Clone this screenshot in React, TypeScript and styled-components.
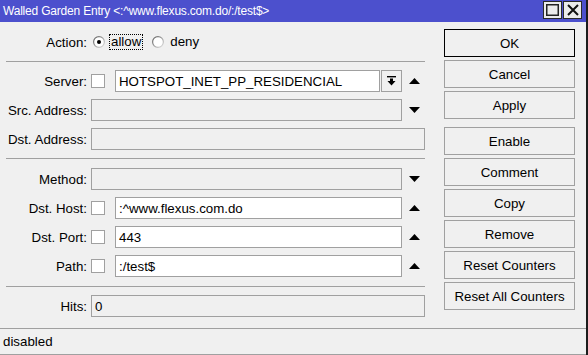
import React from 'react';
import styled, { createGlobalStyle } from 'styled-components';

const GlobalStyle = createGlobalStyle`
  html, body {
    margin: 0;
    padding: 0;
    background: #f0f0f0;
  }
  body {
    font-family: "Liberation Sans", Arial, sans-serif;
    font-size: 13.3px;
    color: #000;
  }
`;

// window frame
const Window = styled.div`
  width: 588px;
  height: 355px;
  box-sizing: border-box;
  border-right: 2px solid #1c1c1c;
  display: flex;
  flex-direction: column;
  background: #f0f0f0;
  overflow: hidden;
`;

const TitleBar = styled.div`
  height: 22px;
  flex: none;
  background: #4c50cd;
  display: flex;
  align-items: center;
  padding-left: 3px;
`;

const TitleText = styled.div`
  flex: 1;
  color: #fff;
  font-size: 12px;
  letter-spacing: -0.2px;
  white-space: nowrap;
`;

const TitleButtons = styled.div`
  display: flex;
  gap: 1px;
  margin-right: 4px;
  align-self: flex-start;
  margin-top: 1px;
`;

const TitleButton = styled.div`
  width: 19px;
  height: 18px;
  box-sizing: border-box;
  border: 1px solid #2a2a2a;
  background: #ebebeb;
  display: flex;
  align-items: center;
  justify-content: center;
`;

const Body = styled.div`
  height: 306px;
  flex: none;
  display: flex;
`;

// left side form
const FormPanel = styled.div`
  width: 419px;
  margin-left: 6px;
  display: flex;
  flex-direction: column;
`;

const Section = styled.div<{ $top: number; $bottom: number }>`
  display: flex;
  flex-direction: column;
  gap: 7px;
  padding-top: ${p => p.$top}px;
  padding-bottom: ${p => p.$bottom}px;
`;

const Divider = styled.div`
  height: 1px;
  background: #a0a0a0;
`;

const FieldRow = styled.div`
  display: grid;
  grid-template-columns: 85px 1fr 23px;
  height: 22px;
  align-items: center;
`;

const Label = styled.div`
  text-align: right;
  padding-right: 4px;
  white-space: nowrap;
`;

const FieldCell = styled.div<{ $wide?: boolean }>`
  display: flex;
  align-items: center;
  height: 22px;
  grid-column: ${p => (p.$wide ? '2 / 4' : '2 / 3')};
`;

const CheckBox = styled.div`
  width: 14px;
  height: 14px;
  box-sizing: border-box;
  border: 1px solid #a0a0a0;
  background: #fff;
  margin-right: 10px;
  flex: none;
`;

const TextBox = styled.div<{ $readOnly?: boolean }>`
  flex: 1;
  height: 22px;
  box-sizing: border-box;
  border: 1px solid #a0a0a0;
  background: ${p => (p.$readOnly ? '#f0f0f0' : '#fff')};
  padding-left: 3px;
  display: flex;
  align-items: center;
  white-space: nowrap;
  overflow: hidden;
`;

const ComboButton = styled.div`
  width: 21px;
  height: 22px;
  box-sizing: border-box;
  border: 1px solid #a0a0a0;
  margin-left: 1px;
  flex: none;
  display: flex;
  align-items: center;
  justify-content: center;
  background: #f0f0f0;
`;

const ArrowCell = styled.div`
  display: flex;
  justify-content: center;
  padding-left: 1px;
`;

const RadioGroup = styled.div`
  display: flex;
  align-items: center;
  grid-column: 2 / 4;
  padding-left: 2px;
`;

const RadioLabel = styled.span<{ $focused?: boolean }>`
  display: inline-block;
  line-height: 14px;
  padding: 0 1px;
  margin: 0 ${p => (p.$focused ? 10 : 0)}px 0 5px;
  outline: ${p => (p.$focused ? '1px dotted #000' : 'none')};
`;

// right button column
const ButtonColumn = styled.div`
  width: 131px;
  margin-left: 19px;
  padding-top: 7px;
  display: flex;
  flex-direction: column;
  gap: 3px;
`;

const ActionButton = styled.button<{ $default?: boolean; $spaced?: boolean }>`
  height: 28px;
  box-sizing: border-box;
  border: 1px solid ${p => (p.$default ? '#000' : '#a0a0a0')};
  background: #f0f0f0;
  font-family: inherit;
  font-size: 13.3px;
  color: #000;
  padding: 0;
  margin-top: ${p => (p.$spaced ? 5 : 0)}px;
  white-space: nowrap;
`;

const StatusBar = styled.div`
  flex: 1;
  border-top: 1px solid #a0a0a0;
  border-bottom: 1px solid #a0a0a0;
  display: flex;
  align-items: center;
  padding-left: 3px;
`;

const Arrow = ({ dir }: { dir: 'up' | 'down' }) => (
  <svg width="11" height="6" viewBox="0 0 11 6">
    {dir === 'up' ? <polygon points="5.5,0 11,6 0,6" fill="#000" /> : <polygon points="0,0 11,0 5.5,6" fill="#000" />}
  </svg>
);

const DropIcon = () => (
  <svg width="9" height="10" viewBox="0 0 9 10">
    <rect x="0" y="0" width="9" height="1.4" fill="#000" />
    <rect x="3" y="2.5" width="3" height="3" fill="#000" />
    <polygon points="0.5,5 8.5,5 4.5,9.5" fill="#000" />
  </svg>
);

const RadioDot = ({ checked }: { checked?: boolean }) => (
  <svg width="12" height="12" viewBox="0 0 12 12">
    <defs>
      <linearGradient id="ring" x1="0" y1="0" x2="1" y2="1">
        <stop offset="0" stopColor="#5a5a5a" />
        <stop offset="1" stopColor="#e4e4e4" />
      </linearGradient>
    </defs>
    <circle cx="6" cy="6" r="5.4" fill="#fff" stroke="url(#ring)" strokeWidth="1.2" />
    {checked && <circle cx="6" cy="6" r="2" fill="#000" />}
  </svg>
);

const MaxIcon = () => (
  <svg width="13" height="12" viewBox="0 0 13 12">
    <rect x="0.75" y="0.75" width="11.5" height="10.5" fill="none" stroke="#222" strokeWidth="1.5" />
  </svg>
);

const CloseIcon = () => (
  <svg width="12" height="12" viewBox="0 0 12 12">
    <path d="M1 1 L11 11 M11 1 L1 11" stroke="#111" strokeWidth="2" />
  </svg>
);

type Field = {
  label: string;
  value?: string;
  check?: boolean;
  readOnly?: boolean;
  combo?: boolean;
  arrow?: 'up' | 'down';
};

const serverFields: Field[] = [
  { label: 'Server:', value: 'HOTSPOT_INET_PP_RESIDENCIAL', check: true, combo: true, arrow: 'up' },
  { label: 'Src. Address:', readOnly: true, arrow: 'down' },
  { label: 'Dst. Address:', readOnly: true },
];

const matchFields: Field[] = [
  { label: 'Method:', readOnly: true, arrow: 'down' },
  { label: 'Dst. Host:', value: ':^www.flexus.com.do', check: true, arrow: 'up' },
  { label: 'Dst. Port:', value: '443', check: true, arrow: 'up' },
  { label: 'Path:', value: ':/test$', check: true, arrow: 'up' },
];

const buttons = ['OK', 'Cancel', 'Apply', 'Enable', 'Comment', 'Copy', 'Remove', 'Reset Counters', 'Reset All Counters'];

const FieldLine = ({ f }: { f: Field }) => (
  <FieldRow>
    <Label>{f.label}</Label>
    <FieldCell $wide={!f.arrow}>
      {f.check && <CheckBox />}
      <TextBox $readOnly={f.readOnly}>{f.value}</TextBox>
      {f.combo && (
        <ComboButton>
          <DropIcon />
        </ComboButton>
      )}
    </FieldCell>
    {f.arrow && (
      <ArrowCell>
        <Arrow dir={f.arrow} />
      </ArrowCell>
    )}
  </FieldRow>
);

export default function App() {
  return (
    <>
      <GlobalStyle />
      <Window>
        <TitleBar>
          <TitleText>Walled Garden Entry &lt;:^www.flexus.com.do/:/test$&gt;</TitleText>
          <TitleButtons>
            <TitleButton>
              <MaxIcon />
            </TitleButton>
            <TitleButton>
              <CloseIcon />
            </TitleButton>
          </TitleButtons>
        </TitleBar>
        <Body>
          <FormPanel>
            <Section $top={9} $bottom={8}>
              <FieldRow>
                <Label>Action:</Label>
                <RadioGroup>
                  <RadioDot checked />
                  <RadioLabel $focused>allow</RadioLabel>
                  <RadioDot />
                  <RadioLabel>deny</RadioLabel>
                </RadioGroup>
              </FieldRow>
            </Section>
            <Divider />
            <Section $top={8} $bottom={8}>
              {serverFields.map(f => (
                <FieldLine key={f.label} f={f} />
              ))}
            </Section>
            <Divider />
            <Section $top={9} $bottom={9}>
              {matchFields.map(f => (
                <FieldLine key={f.label} f={f} />
              ))}
            </Section>
            <Divider />
            <Section $top={8} $bottom={0}>
              <FieldLine f={{ label: 'Hits:', value: '0', readOnly: true }} />
            </Section>
          </FormPanel>
          <ButtonColumn>
            {buttons.map(b => (
              <ActionButton key={b} $default={b === 'OK'} $spaced={b === 'Enable'}>
                {b}
              </ActionButton>
            ))}
          </ButtonColumn>
        </Body>
        <StatusBar>disabled</StatusBar>
      </Window>
    </>
  );
}
